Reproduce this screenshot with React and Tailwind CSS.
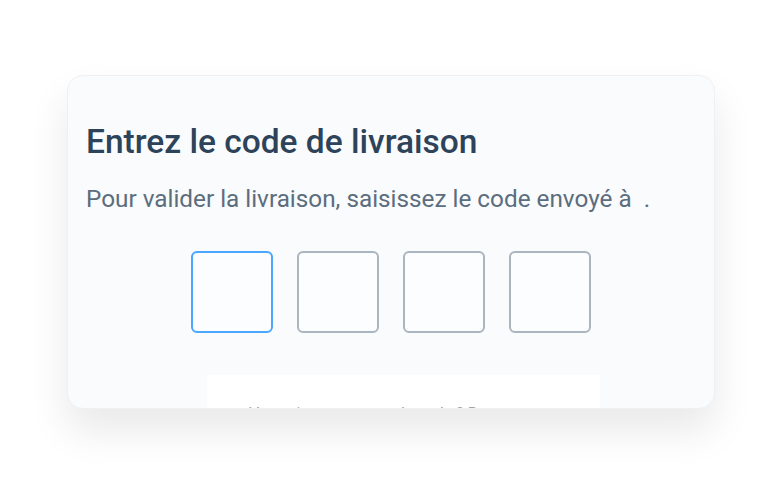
export default function App() {
    const digits = [0, 1, 2, 3];

    return (
        <div className="min-h-screen bg-white pt-[75px] pl-[67px] font-['Roboto',sans-serif]">
            {/* Delivery code card */}
            <div className="w-[648px] h-[334px] overflow-hidden rounded-2xl border border-[#eef1f4] bg-[#f9fbfd] shadow-[0_22px_40px_rgba(0,0,0,0.09)] px-[18px] pt-[46px]">
                <h2 className="text-[33.5px] leading-[40px] font-medium text-[#2d435a]">Entrez le code de livraison</h2>
                <p className="mt-[21px] text-[24.3px] leading-[32px] text-[#5c6d7e]">
                    Pour valider la livraison, saisissez le code envoyé à &nbsp;.
                </p>

                <div className="mt-[36px] flex justify-center gap-[24px]">
                    {digits.map((d) => (
                        <input
                            key={d}
                            type="text"
                            maxLength={1}
                            className={
                                d === 0
                                    ? "w-[82px] h-[82px] rounded-md border-2 border-[#4aa6ff] bg-[#fbfdff] outline-none"
                                    : "w-[82px] h-[82px] rounded-md border-2 border-[#aab5bf] bg-[#fbfdff] outline-none"
                            }
                        />
                    ))}
                </div>

                {/* resend link, mostly hidden below the card edge */}
                <div className="mt-[42px] ml-[121px] w-[393px] h-[60px] bg-white pt-[29px] pl-[42px] text-left text-[16px] leading-[20px] text-[#9aa3ab]">
                    Vous n'avez pas reçu le code ? Renvoyer
                </div>
            </div>
        </div>
    );
}
